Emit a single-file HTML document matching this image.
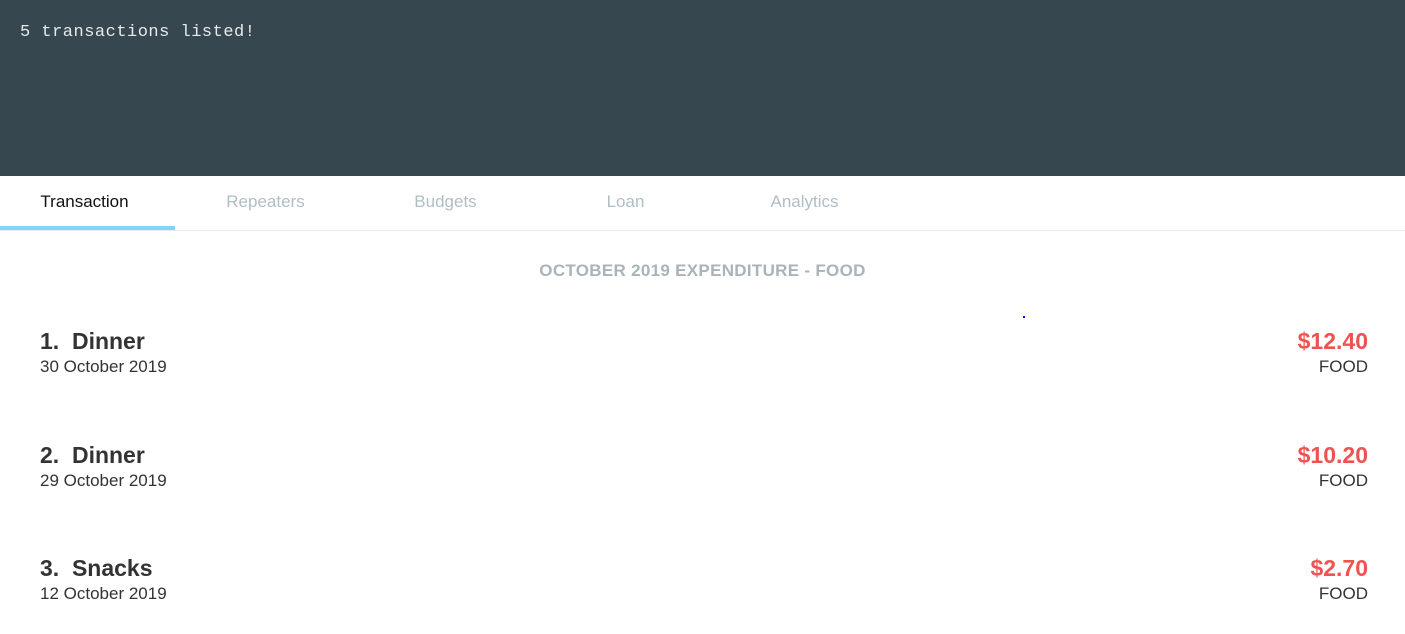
<!DOCTYPE html>
<html><head><style>
*{margin:0;padding:0;box-sizing:border-box}
body{width:1405px;height:634px;overflow:hidden;background:#fff;font-family:"Liberation Sans",sans-serif;position:relative}
.hdr{position:absolute;left:0;top:0;width:1405px;height:176px;background:#37474f}
.hdr span{position:absolute;left:20px;top:23px;color:#e6e9ea;font-family:"Liberation Mono",monospace;font-size:17px;letter-spacing:0.5px}
.tabs{position:absolute;top:176px;left:0;width:1405px;height:55px;border-bottom:1px solid #e6ecef}
.tab{position:absolute;top:16px;width:175px;text-align:center;font-size:17px;color:#b0bec5}
.tab.a{color:#111}
.ind{position:absolute;left:0;top:226px;width:175px;height:4px;background:#81d4fa}
.title{position:absolute;top:261px;width:1405px;text-align:center;color:#a9b4ba;font-weight:bold;font-size:17px;letter-spacing:0.3px}
.row{position:absolute;left:40px;width:1328px;height:50px;color:#333}
.n{position:absolute;left:0;top:1px;font-size:23px;font-weight:bold}
.d{position:absolute;left:0;top:30px;font-size:17px}
.p{position:absolute;right:0;top:1px;font-size:23px;font-weight:bold;color:#ef5350}
.c{position:absolute;right:0;top:30px;font-size:17px}
</style></head><body>
<div class="hdr"><span>5 transactions listed!</span></div>
<div class="tabs">
<div class="tab a" style="left:-3px">Transaction</div>
<div class="tab" style="left:178px">Repeaters</div>
<div class="tab" style="left:358px">Budgets</div>
<div class="tab" style="left:538px">Loan</div>
<div class="tab" style="left:717px">Analytics</div>
</div>
<div class="ind"></div>
<div class="title">OCTOBER 2019 EXPENDITURE - FOOD</div>
<div style="position:absolute;left:1023px;top:316px;width:2px;height:2px;background:#00f"></div>
<div class="row" style="top:327px"><div class="n">1.&nbsp; Dinner</div><div class="d">30 October 2019</div><div class="p">$12.40</div><div class="c">FOOD</div></div>
<div class="row" style="top:441px"><div class="n">2.&nbsp; Dinner</div><div class="d">29 October 2019</div><div class="p">$10.20</div><div class="c">FOOD</div></div>
<div class="row" style="top:554px"><div class="n">3.&nbsp; Snacks</div><div class="d">12 October 2019</div><div class="p">$2.70</div><div class="c">FOOD</div></div>
</body></html>
